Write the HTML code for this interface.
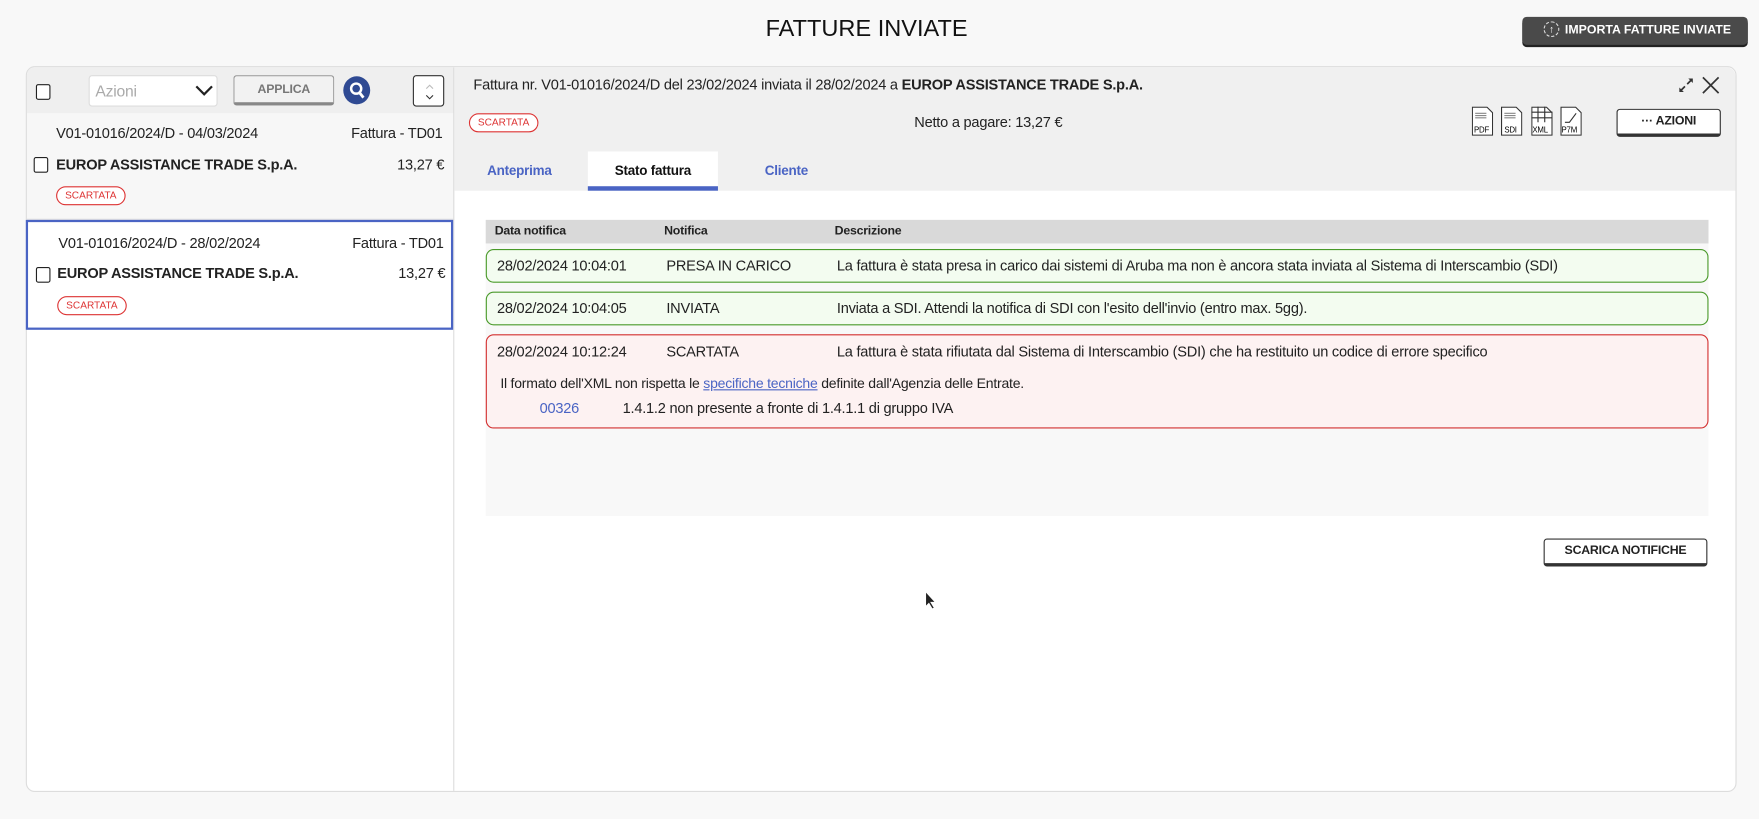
<!DOCTYPE html>
<html><head><meta charset="utf-8"><style>
*{box-sizing:border-box;margin:0;padding:0}
html,body{width:1759px;height:819px;overflow:hidden;background:#f8f8f8;font-family:"Liberation Sans",sans-serif;color:#222}
#s{position:absolute;left:0;top:0;width:1568px;height:730px;transform:scale(1.12181);transform-origin:0 0;letter-spacing:-0.2px}
.a{position:absolute}
.badge{position:absolute;border:1px solid #d33;color:#d33;border-radius:9px;font-size:9px;height:17px;line-height:15px;padding:0 7px;background:#fff;letter-spacing:0}
.cb{position:absolute;width:13px;height:14px;border:1.6px solid #222;border-radius:2px;background:#fff}
.row{position:absolute;left:433px;width:1090px;border-radius:7px;font-size:13px}
.row span{position:absolute}
.tab{position:absolute;top:135px;height:35px;line-height:34px;font-size:12px;font-weight:bold;color:#4a64c4;text-align:center}
.ic{position:absolute;top:95px;width:19px;height:26px}
</style></head><body><div id="s">
<div class="a" style="left:0;top:14px;width:1545px;text-align:center;font-size:21px;color:#111;letter-spacing:0">FATTURE INVIATE</div>
<div class="a" style="left:1357px;top:15px;width:201px;height:25px;background:#4a4a4a;border-radius:4px;box-shadow:0 2px 0 #222;color:#fff;font-size:11px;font-weight:bold;line-height:24px;padding-left:38px;letter-spacing:0">IMPORTA FATTURE INVIATE</div>
<div class="a" style="left:1376px;top:19px;width:14px;height:14px;border:1px dashed #ddd;border-radius:50%;color:#fff;font-size:9px;text-align:center;line-height:12px">↑</div>

<div class="a" style="left:23px;top:59px;width:1525px;height:647px;border:1px solid #ddd;border-radius:8px;background:#fff;overflow:hidden">
 <div class="a" style="left:0;top:0;width:381px;height:41px;background:#efefef"></div>
 <div class="a" style="left:0;top:41px;width:381px;height:95px;background:#f7f7f7;border-bottom:1px solid #ddd"></div>
 <div class="a" style="left:380px;top:0;width:1px;height:647px;background:#ddd"></div>
</div>
<div class="cb" style="left:32px;top:75px"></div>
<div class="a" style="left:79px;top:67px;width:115px;height:28px;border:1px solid #ddd;border-radius:3px;background:#fff;color:#aaa;font-size:14px;line-height:27px;padding-left:5px">Azioni<svg class="a" style="left:94px;top:8px" width="16" height="10"><path d="M1 1l7 7 7-7" fill="none" stroke="#222" stroke-width="2"/></svg></div>
<div class="a" style="left:208px;top:67px;width:90px;height:27px;border:1px solid #999;border-bottom:3px solid #888;border-radius:3px;background:#f2f2f2;color:#777;font-size:11px;font-weight:bold;text-align:center;line-height:24px">APPLICA</div>
<div class="a" style="left:306px;top:68px;width:24px;height:25px;border-radius:50%;background:#2f4a93"></div>
<svg class="a" style="left:310px;top:72px" width="16" height="17"><circle cx="7.5" cy="7" r="4.5" fill="none" stroke="#fff" stroke-width="2.2"/><path d="M10 10l4 5" stroke="#fff" stroke-width="2.5"/></svg>
<div class="a" style="left:368px;top:67px;width:28px;height:28px;border:1px solid #333;border-radius:3px;background:#fff"><svg class="a" style="left:9px;top:6px" width="10" height="16"><path d="M2 5l3-3 3 3" stroke="#bbb" fill="none"/><path d="M2 11l3 3 3-3" stroke="#333" fill="none"/></svg></div>

<div class="a" style="left:50px;top:111px;font-size:13px">V01-01016/2024/D - 04/03/2024</div>
<div class="a" style="left:313px;top:111px;font-size:13px">Fattura - TD01</div>
<div class="cb" style="left:30px;top:140px"></div>
<div class="a" style="left:50px;top:139px;font-size:13px;font-weight:bold">EUROP ASSISTANCE TRADE S.p.A.</div>
<div class="a" style="left:354px;top:139px;font-size:13px">13,27 €</div>
<div class="badge" style="left:50px;top:166px">SCARTATA</div>

<div class="a" style="left:23px;top:196px;width:381px;height:98px;border:2px solid #4a64c4;background:#fff"></div>
<div class="a" style="left:52px;top:209px;font-size:13px">V01-01016/2024/D - 28/02/2024</div>
<div class="a" style="left:314px;top:209px;font-size:13px">Fattura - TD01</div>
<div class="cb" style="left:32px;top:238px"></div>
<div class="a" style="left:51px;top:236px;font-size:13px;font-weight:bold">EUROP ASSISTANCE TRADE S.p.A.</div>
<div class="a" style="left:355px;top:236px;font-size:13px">13,27 €</div>
<div class="badge" style="left:51px;top:264px">SCARTATA</div>

<div class="a" style="left:405px;top:60px;width:1142px;height:110px;background:#f0f0f0;border-top-right-radius:8px"></div>
<div class="a" style="left:422px;top:68px;font-size:13px">Fattura nr. V01-01016/2024/D del 23/02/2024 inviata il 28/02/2024 a <b>EUROP ASSISTANCE TRADE S.p.A.</b></div>
<svg class="a" style="left:1496px;top:69px" width="14" height="14"><path d="M2 12l4-4M12 2L8 6" stroke="#333" stroke-width="1.5"/><path d="M1 9v4h4zM13 5V1H9z" fill="#333"/></svg>
<svg class="a" style="left:1517px;top:68px" width="16" height="16"><path d="M1 1l14 14M15 1L1 15" stroke="#333" stroke-width="1.5"/></svg>
<div class="badge" style="left:418px;top:101px">SCARTATA</div>
<div class="a" style="left:815px;top:101px;font-size:13px">Netto a pagare: 13,27 €</div>
<svg class="ic" style="left:1312px" viewBox="0 0 19 26"><path d="M.5 .5h13l5 5v20H.5z" fill="#fff" stroke="#333"/><path d="M3 6h10M3 8h10M3 10h10" stroke="#888"/><text x="2" y="23" font-size="7" font-family="Liberation Sans">PDF</text></svg>
<svg class="ic" style="left:1338px" viewBox="0 0 19 26"><path d="M.5 .5h13l5 5v20H.5z" fill="#fff" stroke="#333"/><path d="M3 6h10M3 8h10M3 10h10" stroke="#888"/><text x="3" y="23" font-size="7" font-family="Liberation Sans">SDI</text></svg>
<svg class="ic" style="left:1365px" viewBox="0 0 19 26"><path d="M.5 .5h13l5 5v20H.5z" fill="#fff" stroke="#333"/><path d="M0 5h19M0 10h19M6 0v14M12 0v14" stroke="#333"/><text x="1" y="23" font-size="7" font-family="Liberation Sans">XML</text></svg>
<svg class="ic" style="left:1391px" viewBox="0 0 19 26"><path d="M.5 .5h13l5 5v20H.5z" fill="#fff" stroke="#333"/><path d="M4 14h4l6-8" stroke="#333" fill="none"/><text x="1" y="23" font-size="7" font-family="Liberation Sans">P7M</text></svg>
<div class="a" style="left:1441px;top:97px;width:93px;height:25px;background:#fff;border:1px solid #333;border-bottom:3px solid #333;border-radius:3px;font-size:11px;font-weight:bold;text-align:center;line-height:21px">··· AZIONI</div>

<div class="tab" style="left:422px;width:82px">Anteprima</div>
<div class="tab" style="left:524px;width:116px;background:#fff;color:#111;border-bottom:4px solid #4a64c4">Stato fattura</div>
<div class="tab" style="left:660px;width:82px">Cliente</div>

<div class="a" style="left:433px;top:196px;width:1090px;height:264px;background:#f8f8f8"></div>
<div class="a" style="left:433px;top:196px;width:1090px;height:21px;background:#d9d9d9;font-size:11px;font-weight:bold;line-height:21px"><span class="a" style="left:8px">Data notifica</span><span class="a" style="left:159px">Notifica</span><span class="a" style="left:311px">Descrizione</span></div>
<div class="row" style="top:222px;height:30px;border:1px solid #4a9a2a;background:#f3fcf0;line-height:28px"><span style="left:9px">28/02/2024 10:04:01</span><span style="left:160px">PRESA IN CARICO</span><span style="left:312px">La fattura è stata presa in carico dai sistemi di Aruba ma non è ancora stata inviata al Sistema di Interscambio (SDI)</span></div>
<div class="row" style="top:260px;height:30px;border:1px solid #4a9a2a;background:#f3fcf0;line-height:28px"><span style="left:9px">28/02/2024 10:04:05</span><span style="left:160px">INVIATA</span><span style="left:312px">Inviata a SDI. Attendi la notifica di SDI con l'esito dell'invio (entro max. 5gg).</span></div>
<div class="row" style="top:298px;height:84px;border:1px solid #d32f2f;background:#fdf2f2"><span style="left:9px;top:7px">28/02/2024 10:12:24</span><span style="left:160px;top:7px">SCARTATA</span><span style="left:312px;top:7px">La fattura è stata rifiutata dal Sistema di Interscambio (SDI) che ha restituito un codice di errore specifico</span>
<span style="left:12px;top:36px;font-size:12.5px">Il formato dell'XML non rispetta le <u style="color:#4a64c4">specifiche tecniche</u> definite dall'Agenzia delle Entrate.</span>
<span style="left:47px;top:57px;color:#4a64c4">00326</span><span style="left:121px;top:57px">1.4.1.2 non presente a fronte di 1.4.1.1 di gruppo IVA</span></div>

<div class="a" style="left:1376px;top:480px;width:146px;height:25px;background:#fff;border:1px solid #333;border-bottom:3px solid #333;border-radius:3px;font-size:11px;font-weight:bold;text-align:center;line-height:21px">SCARICA NOTIFICHE</div>
<svg class="a" style="left:824px;top:526px" width="12" height="18"><path d="M1 1v14l3-3 3 5 2-1-3-5h4z" fill="#222" stroke="#fff"/></svg>
</div></body></html>
